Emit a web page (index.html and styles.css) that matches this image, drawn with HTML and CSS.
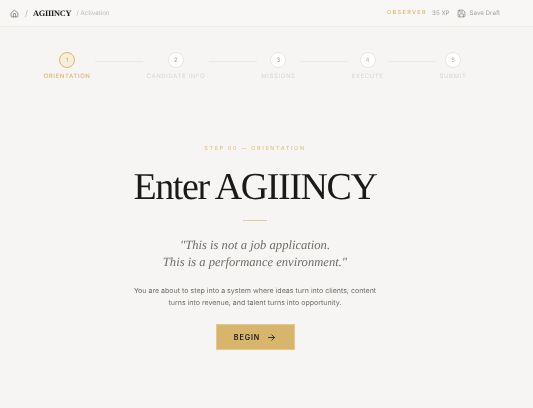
FILE: index.html
```html
<!DOCTYPE html>
<html lang="en">
<head>
<meta charset="utf-8">
<title>AGIIINCY Activation</title>
<link rel="stylesheet" href="styles.css">
</head>
<body>
<header class="topbar">
  <div class="crumbs">
    <svg class="home" viewBox="0 0 24 24" width="9" height="9" fill="none" stroke="#77736c" stroke-width="2" stroke-linecap="round" stroke-linejoin="round"><path d="M3 10.5 12 3l9 7.5V20a1 1 0 0 1-1 1H4a1 1 0 0 1-1-1z"/><path d="M9 21v-8a1 1 0 0 1 1-1h4a1 1 0 0 1 1 1v8"/></svg>
    <span class="slash">/</span>
    <span class="brand">AGIIINCY</span>
    <span class="sub">/ Activation</span>
  </div>
  <div class="status">
    <span class="rank">OBSERVER</span>
    <span class="xp">35 XP</span>
    <span class="save">
      <svg viewBox="0 0 24 24" width="9" height="9" fill="none" stroke="#8a8780" stroke-width="2" stroke-linecap="round" stroke-linejoin="round"><path d="M15 3H5a2 2 0 0 0-2 2v14a2 2 0 0 0 2 2h14a2 2 0 0 0 2-2V9z"/><path d="M17 21v-7a1 1 0 0 0-1-1H8a1 1 0 0 0-1 1v7"/><path d="M7 3v4a1 1 0 0 0 1 1h7"/></svg>
      Save Draft
    </span>
  </div>
</header>
<main class="main">
  <ol class="stepper">
    <li class="step active"><span class="dot">1</span><span class="label">ORIENTATION</span></li>
    <li class="line"></li>
    <li class="step"><span class="dot">2</span><span class="label">CANDIDATE INFO</span></li>
    <li class="line"></li>
    <li class="step"><span class="dot">3</span><span class="label">MISSIONS</span></li>
    <li class="line"></li>
    <li class="step"><span class="dot">4</span><span class="label">EXECUTE</span></li>
    <li class="line"></li>
    <li class="step"><span class="dot">5</span><span class="label">SUBMIT</span></li>
  </ol>
  <section class="hero">
    <p class="eyebrow">STEP 00 — ORIENTATION</p>
    <h1 class="title">Enter AGIIINCY</h1>
    <div class="rule"></div>
    <blockquote class="quote">"This is not a job application.<br>This is a performance environment."</blockquote>
    <p class="copy">You are about to step into a system where ideas turn into clients, content turns into revenue, and talent turns into opportunity.</p>
    <button class="begin" type="button">BEGIN
      <svg viewBox="0 0 24 24" width="9" height="9" fill="none" stroke="#1a1a1a" stroke-width="2.2" stroke-linecap="round" stroke-linejoin="round"><path d="M4 12h16"/><path d="m13 5 7 7-7 7"/></svg>
    </button>
  </section>
</main>
</body>
</html>
```
FILE: styles.css
```css
* { box-sizing: border-box; }
html, body { margin: 0; height: 100%; }
body {
  background: #f6f5f3;
  font-family: Inter, "Liberation Sans", sans-serif;
  color: #1a1a1a;
  overflow: hidden;
  text-rendering: geometricPrecision;
}
.topbar {
  height: 27px;
  display: flex;
  align-items: center;
  justify-content: space-between;
  padding: 0 33px 0 10px;
  background: #f8f7f5;
  border-bottom: 1px solid #f0ede5;
}
.crumbs, .status, .save { display: flex; align-items: center; }
.crumbs, .status, .main { will-change: opacity; }
.crumbs { gap: 5px; }
.home { display: block; }
.slash { color: #b9b6b0; font-size: 8px; margin-left: 1px; }
.brand { font-family: "Liberation Serif", serif; font-weight: 700; font-size: 8.3px; letter-spacing: -0.2px; }
.sub { font-size: 6.2px; color: #bdbab4; }
.status { gap: 5px; }
.rank { font-size: 5.5px; letter-spacing: 1.4px; color: #d8b56c; font-weight: 500; }
.xp { font-size: 6.2px; color: #a5a29c; }
.save { gap: 4px; font-size: 6.2px; color: #a5a29c; margin-left: 2px; }
.main { width: 510px; }
.stepper {
  list-style: none;
  margin: 0;
  padding: 25px 0 0;
  display: flex;
  justify-content: center;
  align-items: flex-start;
}
.step { display: flex; flex-direction: column; align-items: center; gap: 5px; }
.dot {
  width: 16px;
  height: 16px;
  border-radius: 50%;
  background: #fff;
  border: 1px solid #e9e6e0;
  display: flex;
  align-items: center;
  justify-content: center;
  font-size: 6px;
  color: #a9a6a0;
}
.label { font-size: 6px; letter-spacing: 0.62px; color: #d6d4cf; white-space: nowrap; font-weight: 400; }
.active .dot { background: #f7efdd; border-color: #d8b56c; color: #c9a45a; }
.active .label { color: #d8b56c; font-weight: 500; }
.line { width: 48px; height: 1px; background: #ebe9e4; margin: 9px 4px 0; }
.hero { display: flex; flex-direction: column; align-items: center; text-align: center; }
.eyebrow { margin: 65px 0 0; font-size: 5.5px; letter-spacing: 1.6px; color: #e0c384; font-weight: 500; line-height: 8px; }
.title { margin: 10px 0 0; font-family: "Liberation Serif", serif; font-weight: 400; font-size: 38px; line-height: 48px; letter-spacing: -1.4px; color: #1a1a1a; }
.rule { width: 24px; height: 1px; background: #e5cc97; margin-top: 9px; }
.quote { margin: 16px 0 0; font-family: "Liberation Serif", serif; font-style: italic; font-size: 12.6px; line-height: 17px; color: #6e6b66; }
.copy { margin: 14px 0 0; width: 250px; font-size: 7.05px; line-height: 12px; color: #6f6c67; }
.begin {
  margin-top: 15px;
  width: 79px;
  height: 26px;
  display: flex;
  align-items: center;
  justify-content: center;
  gap: 7px;
  background: #d8b56c;
  border: 1px solid #e3c88c;
  font-family: Inter, "Liberation Sans", sans-serif;
  font-size: 7.2px;
  font-weight: 600;
  letter-spacing: 0.9px;
  color: #1a1a1a;
  padding: 0;
}
```
